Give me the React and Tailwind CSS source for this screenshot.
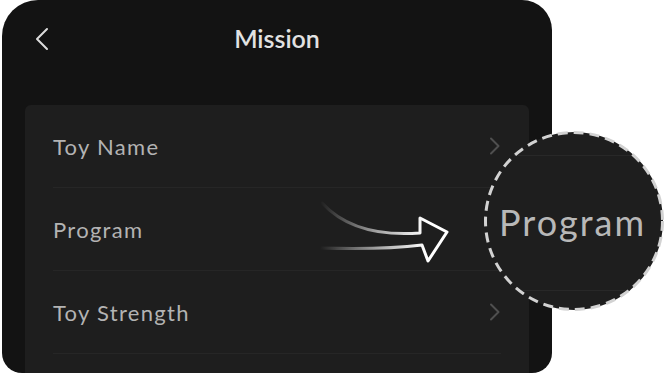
import React from "react";

const font = { fontFamily: "Lato, 'Noto Sans', sans-serif" };

function Chevron() {
  return (
    <svg width="12" height="18" viewBox="0 0 12 18" className="shrink-0">
      <path d="M2 1.5 L9.5 9 L2 16.5" fill="none" stroke="#4f4f4f" strokeWidth="2" strokeLinecap="round" strokeLinejoin="round" />
    </svg>
  );
}

function Row({ label, chevron = true }) {
  return (
    <div className="h-[83px] flex items-center justify-between border-b border-[#262626]">
      <span className="text-[22px] text-[#b3b3b3] tracking-[1.3px]">{label}</span>
      {chevron && <Chevron />}
    </div>
  );
}

export default function App() {
  return (
    <div className="relative w-[666px] h-[376px] bg-white overflow-hidden" style={font}>
      <div className="ml-[2px] w-[550px] h-[373px] bg-[#131313] rounded-tl-[36px] rounded-tr-[30px] rounded-b-[20px] overflow-hidden flex flex-col">
        <div className="h-[80px] shrink-0 relative flex items-center justify-center pb-[2px]">
          <svg width="16" height="24" viewBox="0 0 16 24" className="absolute left-[32px] top-[27px]">
            <path d="M13 2 L3 12 L13 22" fill="none" stroke="#dcdcdc" strokeWidth="2" strokeLinecap="round" strokeLinejoin="round" />
          </svg>
          <span className="text-[25px] font-semibold text-[#e2e2e2]">Mission</span>
        </div>
        <div className="mt-[25px] mx-[23px] flex-1 bg-[#1e1e1e] rounded-t-[6px] px-[28px]">
          <Row label="Toy Name" />
          <Row label="Program" chevron={false} />
          <Row label="Toy Strength" />
        </div>
      </div>

      <svg className="absolute left-[316px] top-[196px]" width="140" height="72" viewBox="316 196 140 72">
        <defs>
          <linearGradient id="ag" x1="320" y1="0" x2="425" y2="0" gradientUnits="userSpaceOnUse">
            <stop offset="0" stopColor="#ffffff" stopOpacity="0" />
            <stop offset="0.55" stopColor="#ffffff" stopOpacity="0.6" />
            <stop offset="1" stopColor="#ffffff" stopOpacity="1" />
          </linearGradient>
        </defs>
        <path
          d="M322 203 C 345 228, 380 236, 420 233 L 420 218 L 447 232 L 428 261 L 422 245 C 390 249, 355 249, 320 248"
          fill="none"
          stroke="url(#ag)"
          strokeWidth="3"
          strokeLinejoin="round"
          strokeLinecap="round"
        />
      </svg>

      <div className="absolute left-[485px] top-[132px] w-[178px] h-[178px] rounded-full bg-[#1e1e1e] overflow-hidden">
        <div className="absolute left-0 right-0 top-[23px] h-[1px] bg-[#282828]" />
        <div className="absolute left-0 right-0 top-[158px] h-[1px] bg-[#282828]" />
        <div className="absolute left-[14px] top-[66px] h-[48px] flex items-center">
          <span className="text-[36px] text-[#b8b8b8] leading-none tracking-[2px]">Program</span>
        </div>
      </div>
      <svg className="absolute left-[483px] top-[130px]" width="182" height="182" viewBox="0 0 182 182">
        <circle cx="91" cy="91" r="88.5" fill="none" stroke="#d2d2d2" strokeWidth="3" strokeDasharray="10 6" />
      </svg>
    </div>
  );
}
